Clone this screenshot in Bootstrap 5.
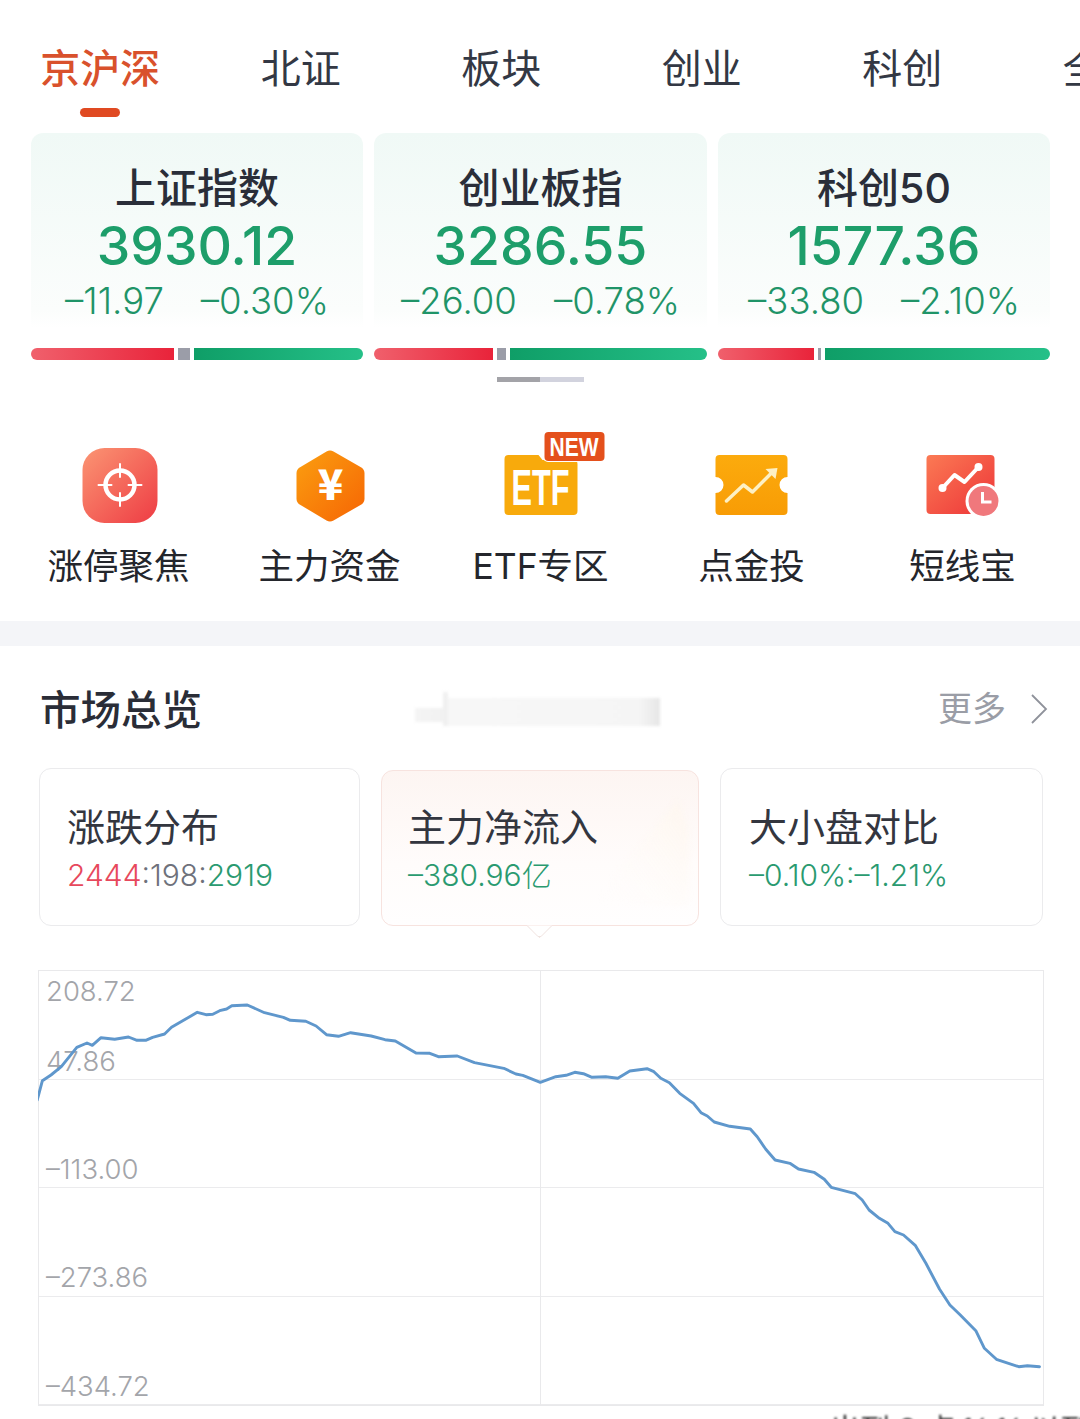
<!DOCTYPE html>
<html lang="zh">
<head>
<meta charset="utf-8">
<title>市场总览</title>
<link rel="stylesheet" href="https://cdn.jsdelivr.net/npm/bootstrap@5.3.0/dist/css/bootstrap.min.css">
<style>
html,body{height:1419px;overflow:hidden;background:#fff}
body{font-family:Inter,"Noto Sans CJK SC",sans-serif;color:#2b2f3a}
.shell{width:1080px;height:1419px;overflow:hidden}
.tabbar{height:133px;padding-top:44px;white-space:nowrap}
.tabitem{width:200.5px;text-align:center;font-size:40px;line-height:50px;color:#333844;font-weight:400;flex:none}
.tabitem.on{color:#d9512c;font-weight:500}
.tabmark{width:40px;height:9px;border-radius:5px;background:#e04a22;margin:14px auto 0}
.idxgrid{display:grid;grid-template-columns:332px 333px 332px;gap:11px;padding-left:31px}
.idxcard{height:227px;border-radius:12px 12px 6px 6px;background:linear-gradient(180deg,#f0f9f6 0,#fbfdfc 78%,#fff 86%);text-align:center}
.idxname{font-size:41px;line-height:50px;font-weight:500;color:#2a2e39;padding-top:30px;box-sizing:content-box;height:50px}
.idxval{font-size:53.5px;line-height:66px;font-weight:500;color:#1d9e6a}
.idxchg{font-size:36.5px;line-height:44px;font-weight:300;color:#1f9468;gap:37px}
.barline{height:12px;gap:4px;margin-top:25px}
.barline span{display:block;height:12px}
.seg-r{background:linear-gradient(90deg,#f0606c,#e9233a);border-radius:6px 0 0 6px}
.seg-g{background:#9b9da8}
.seg-u{background:linear-gradient(90deg,#0f9e67,#25c088);border-radius:0 6px 6px 0}
.pager{width:87px;height:5px;background:#d2d3de;margin:17px 0 0 497px}
.pager i{display:block;width:43px;height:5px;background:#a3a3a8}
.quick{margin:48px 0 0 13px;height:191px}
.quickitem{width:211px;text-align:center;flex:none}
.quickitem svg{display:block;margin:0 auto;width:120px;height:98px}
.quicklabel{font-size:35.5px;line-height:50px;color:#24262c;margin-top:14px;white-space:nowrap}
.bandgap{height:25px;background:#f4f5f8}
.sechead{height:122px;padding:40px 32px 0 40px}
.sectitle{font-size:40.5px;line-height:50px;font-weight:500;color:#2a2d37;width:161px;white-space:nowrap}
.smudge{width:245px;height:34px;margin:6px 0 0 214px;background:linear-gradient(#f0f0f0,#f0f0f0) 28px 0/5px 100% no-repeat,linear-gradient(90deg,#f4f4f4,#f1f1f1) 0 16px/30px 14px no-repeat,linear-gradient(90deg,#f7f7f7 0,#f5f5f5 90%,#ebebeb 97%,#e6e6e6 100%) 30px 6px/215px 28px no-repeat;filter:blur(1.5px)}
.morelink{font-size:34px;line-height:50px;color:#9a9da6;margin:-2px 0 0 auto}
.morelink svg{width:18px;height:32px;margin-left:24px}
.tilegrid{display:grid;grid-template-columns:321px 318px 323px;gap:21px;margin-left:39px;height:158px}
.tile{border:1px solid #ebebed;border-radius:12px;padding:33px 0 0 27px;background:#fff;position:relative}
.tile.on{margin-top:2px;padding-top:31px;padding-left:26px;border-color:#f7e3df;background:linear-gradient(180deg,#fdf5f2 0,#fffcfb 60%,#fffefe 100%)}
.tile.last{padding-left:28px}
.tile.on::after{content:"";position:absolute;left:148px;bottom:-10px;width:19px;height:19px;background:#fff;border-right:1px solid #ecdcd8;border-bottom:1px solid #ecdcd8;border-bottom-right-radius:4px;transform:rotate(45deg);clip-path:polygon(100% 0,100% 100%,0 100%)}
.tilewedge{position:absolute;right:8px;bottom:20px;width:100px;height:105px;filter:blur(3px)}
.tilename{font-size:38px;line-height:50px;color:#33363f;position:relative}
.tileval{font-size:30px;line-height:40px;font-weight:300;color:#2a9a70;margin-top:3px;white-space:nowrap;position:relative}
.upred{color:#e7485c}.flat{color:#6e717b}
.plot{width:1006px;height:436px;margin:44px 0 0 38px;position:relative;border:1px solid #e9e9eb}
.plotrow{height:108.5px;border-bottom:1px solid #ebebed;font-size:27.5px;line-height:40px;color:#a3a5aa;font-weight:300;padding-left:7px}
.plotrow:last-child{border-bottom:0}
.plotrow.low{padding-top:69px}
.plotnext{margin-top:30px}
.plotsvg{position:absolute;left:-1px;top:-1px;width:1006px;height:436px}
.cutline{font-size:30px;line-height:34px;color:#333;margin:6px 0 0 830px;white-space:nowrap;filter:blur(1px)}
</style>
</head>
<body>
<div class="shell">
  <nav class="d-flex tabbar">
    <div class="tabitem on">京沪深<div class="tabmark"></div></div>
    <div class="tabitem">北证</div>
    <div class="tabitem">板块</div>
    <div class="tabitem">创业</div>
    <div class="tabitem">科创</div>
    <div class="tabitem">全部</div>
  </nav>

  <section class="idxgrid">
    <div class="idxcard">
      <div class="idxname">上证指数</div>
      <div class="idxval">3930.12</div>
      <div class="d-flex justify-content-center idxchg"><span>–11.97</span><span>–0.30%</span></div>
      <div class="d-flex barline"><span class="seg-r" style="width:143px"></span><span class="seg-g" style="width:12px"></span><span class="seg-u" style="width:169px"></span></div>
    </div>
    <div class="idxcard">
      <div class="idxname">创业板指</div>
      <div class="idxval">3286.55</div>
      <div class="d-flex justify-content-center idxchg"><span>–26.00</span><span>–0.78%</span></div>
      <div class="d-flex barline"><span class="seg-r" style="width:119px"></span><span class="seg-g" style="width:9px"></span><span class="seg-u" style="width:197px"></span></div>
    </div>
    <div class="idxcard">
      <div class="idxname">科创50</div>
      <div class="idxval">1577.36</div>
      <div class="d-flex justify-content-center idxchg"><span>–33.80</span><span>–2.10%</span></div>
      <div class="d-flex barline"><span class="seg-r" style="width:96px"></span><span class="seg-g" style="width:3px"></span><span class="seg-u" style="width:225px"></span></div>
    </div>
  </section>
  <div class="pager"><i></i></div>

  <section class="d-flex quick">
    <div class="quickitem">
      <svg viewBox="58.5 430 120 98">
        <defs><linearGradient id="a1" x1="0" y1="0" x2="1" y2="1"><stop offset="0" stop-color="#fb9573"/><stop offset="1" stop-color="#ee3c44"/></linearGradient></defs>
        <rect x="82" y="448" width="75" height="75" rx="22" fill="url(#a1)"/>
        <circle cx="119.5" cy="485" r="14.5" fill="none" stroke="#fff" stroke-width="4.500"/>
        <path d="M119.5 464v13M119.5 493v13M98 485h13M128 485h13" stroke="#fff" stroke-width="2" stroke-linecap="round"/>
      </svg>
      <div class="quicklabel">涨停聚焦</div>
    </div>
    <div class="quickitem">
      <svg viewBox="269.5 430 120 98">
        <defs><linearGradient id="a2" x1="0" y1="0" x2="1" y2="1"><stop offset="0" stop-color="#fb9f10"/><stop offset="1" stop-color="#f66504"/></linearGradient></defs>
        <path d="M326 451.5a7 7 0 0 1 7 0l27 15.500a7 7 0 0 1 4 6v26a7 7 0 0 1-4 6l-27 15.500a7 7 0 0 1-7 0l-26-15.500a7 7 0 0 1-4-6v-26a7 7 0 0 1 4-6z" fill="url(#a2)"/>
        <text x="330" y="500" text-anchor="middle" font-family="'Noto Sans CJK SC',sans-serif" font-size="42" font-weight="900" fill="#fff">¥</text>
      </svg>
      <div class="quicklabel">主力资金</div>
    </div>
    <div class="quickitem">
      <svg viewBox="480.500 430 120 98" overflow="visible">
        <path d="M508 455h30l4 5h31a4 4 0 0 1 4 4v47a4 4 0 0 1-4 4h-65a4 4 0 0 1-4-4v-52a4 4 0 0 1 4-4z" fill="#f8aa0c"/>
        <text x="511" y="505" font-family="'Liberation Sans',sans-serif" font-size="50" font-weight="700" fill="#fff" textLength="58" lengthAdjust="spacingAndGlyphs">ETF</text>
        <rect x="542.500" y="431" width="63" height="31" rx="5" fill="#fff"/>
        <rect x="544" y="432" width="60" height="29" rx="4" fill="#e4501c"/>
        <text x="549" y="456" font-family="'Liberation Sans',sans-serif" font-size="25" font-weight="700" fill="#fff" textLength="49" lengthAdjust="spacingAndGlyphs">NEW</text>
      </svg>
      <div class="quicklabel">ETF专区</div>
    </div>
    <div class="quickitem">
      <svg viewBox="691.5 430 120 98">
        <defs><linearGradient id="a4" x1="0" y1="0" x2="0" y2="1"><stop offset="0" stop-color="#fcab0d"/><stop offset="1" stop-color="#f89c05"/></linearGradient></defs>
        <path d="M719 455h64a4 4 0 0 1 4 4v18a8 8 0 0 0 0 16v18a4 4 0 0 1-4 4h-64a4 4 0 0 1-4-4v-18a8 8 0 0 0 0-16v-18a4 4 0 0 1 4-4z" fill="url(#a4)"/>
        <path d="M726 501l17-16 9 7 20-20" fill="none" stroke="#fdf0c4" stroke-width="3.500" stroke-linecap="round" stroke-linejoin="round"/>
        <path d="M765 469l12-1-2 11z" fill="#fdf0c4"/>
      </svg>
      <div class="quicklabel">点金投</div>
    </div>
    <div class="quickitem">
      <svg viewBox="902.500 430 120 98">
        <defs><linearGradient id="a5" x1="0" y1="0" x2="1" y2="1"><stop offset="0" stop-color="#fb7a54"/><stop offset="1" stop-color="#ed3438"/></linearGradient></defs>
        <rect x="926" y="455" width="68" height="59" rx="4" fill="url(#a5)"/>
        <path d="M942 488l12-13 10 7 14-15" fill="none" stroke="#fff" stroke-width="4" stroke-linecap="round" stroke-linejoin="round"/>
        <circle cx="942" cy="488" r="4" fill="#fff"/><circle cx="978" cy="467" r="4" fill="#fff"/>
        <circle cx="983" cy="501" r="18" fill="#fff"/>
        <circle cx="983" cy="501" r="15" fill="#f0787c"/>
        <path d="M982 492v10h9" fill="none" stroke="#fff" stroke-width="3"/>
      </svg>
      <div class="quicklabel">短线宝</div>
    </div>
  </section>
  <div class="bandgap"></div>

  <header class="d-flex sechead">
    <div class="sectitle">市场总览</div>
    <div class="smudge"></div>
    <div class="morelink d-flex align-items-center align-self-start">更多<svg viewBox="0 0 18 32"><path d="M2 2l14 14L2 30" fill="none" stroke="#8f929b" stroke-width="1.800"/></svg></div>
  </header>

  <section class="tilegrid">
    <div class="tile">
      <div class="tilename">涨跌分布</div>
      <div class="tileval"><span class="upred">2444</span><span class="flat">:198:</span>2919</div>
    </div>
    <div class="tile on">
      <svg class="tilewedge" viewBox="0 0 100 105"><defs><linearGradient id="w1" x1="0" y1="1" x2="1" y2="0"><stop offset="0" stop-color="#fff" stop-opacity="0"/><stop offset="1" stop-color="#fef6ee"/></linearGradient></defs><path d="M0 105L88 0l10 30v75z" fill="url(#w1)"/></svg>
      <div class="tilename">主力净流入</div>
      <div class="tileval">–380.96亿</div>
    </div>
    <div class="tile last">
      <div class="tilename">大小盘对比</div>
      <div class="tileval">–0.10%:–1.21%</div>
    </div>
  </section>

  <section class="plot">
    <div class="plotrow">208.72<div class="plotnext">47.86</div></div>
    <div class="plotrow low">–113.00</div>
    <div class="plotrow low">–273.86</div>
    <div class="plotrow low">–434.72</div>
    <svg class="plotsvg" viewBox="38 970 1006 436">
      <path d="M540.500 970V1405" stroke="#e9e9eb" stroke-width="1"/>
      <path d="M37.200 1100L42.400 1080.700 51 1075 61.300 1066.700 76.800 1047.300 87 1043 92.300 1045.300 101 1037.700 114.700 1039.300 128.500 1037 137 1040.300 145.700 1040.300 152.600 1037.300 164.600 1034 171.500 1027.300 185.300 1019.300 197.300 1012.300 206 1014.700 212.800 1014.300 219.700 1010.700 226.600 1009 231.800 1005.700 247.300 1005 264.500 1012.700 283.400 1017.300 290.300 1020.300 305.800 1021.300 316.100 1026 326.500 1034.700 338.500 1036.300 350.600 1032.700 371.200 1036 385 1039.700 395.300 1041 416 1053 429.800 1053.300 438.400 1056.700 457.300 1056 474.500 1062.700 503.800 1068.300 515.900 1074 522.800 1075.300 540.300 1082.300 555.800 1076.700 566.100 1075.300 574.800 1072.300 583.400 1073.700 592 1077.300 605.700 1076.700 617.800 1078.300 629.800 1071 647 1068.700 653.900 1071.700 660.800 1078.300 669.400 1082.700 679.700 1093.300 693.500 1103.300 701 1112.700 707.300 1116 714.200 1122 729.700 1126.300 750.300 1129 757.200 1136.700 765.800 1149.300 775.100 1160 789.900 1163.300 798.500 1169 814 1172.300 824.300 1179.300 831.200 1187.300 855.300 1193.700 862.200 1200 869.100 1210 879.400 1218.300 888 1223.300 894.900 1231.700 903.500 1235 915.500 1245.700 925.900 1263.300 939.600 1289.300 949.900 1305 960.300 1315 975.800 1330.700 984.400 1348.300 996.400 1359.300 1018.800 1366.700 1027.400 1365.700 1039.500 1366.700" fill="none" stroke="#5f97cc" stroke-width="2.900" stroke-linejoin="round" stroke-linecap="round"/>
    </svg>
  </section>
  <div class="cutline">出到 9 点 ½ ¼ 以到报</div>
</div>
<script src="https://cdn.jsdelivr.net/npm/bootstrap@5.3.0/dist/js/bootstrap.bundle.min.js"></script>
</body>
</html>
